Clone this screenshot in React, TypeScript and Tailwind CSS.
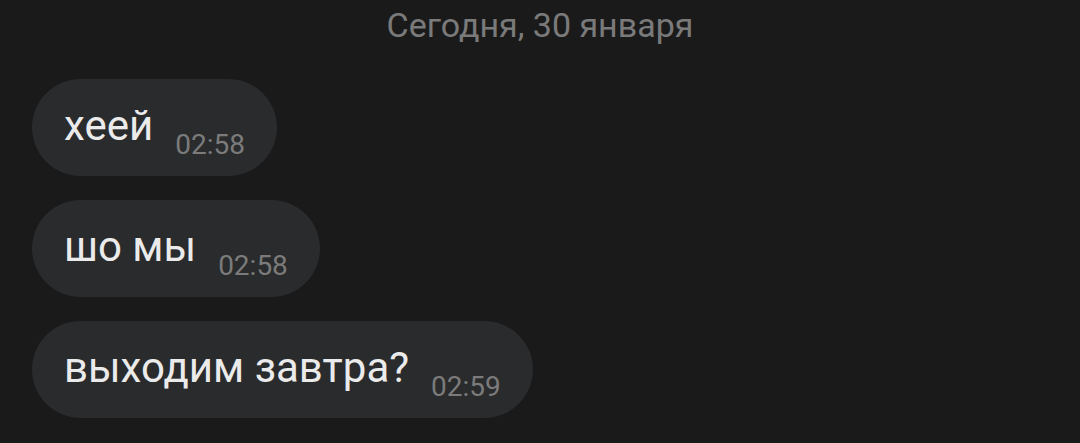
const messages = [
  { text: "хеей", time: "02:58" },
  { text: "шо мы", time: "02:58" },
  { text: "выходим завтра?", time: "02:59" },
];

export default function App() {
  return (
    <div
      className="w-[1080px] h-[443px] overflow-hidden bg-[#1a1a1a]"
      style={{ fontFamily: "Roboto, 'Noto Sans', sans-serif" }}
    >
      <div className="pt-[5px] text-center text-[34px] leading-[40px] text-[#7a7a7a]">
        Сегодня, 30 января
      </div>
      <div className="mt-[34px] flex flex-col items-start gap-[24px] pl-[32px]">
        {messages.map((m, i) => (
          <div
            key={i}
            className="flex h-[97px] items-end rounded-full bg-[#2a2b2d] pl-[32px] pr-[32px] pb-[15px]"
          >
            <span className="text-[42px] leading-[48px] text-[#ebebeb] mb-[11px]">
              {m.text}
            </span>
            <span className="ml-[22px] text-[28px] leading-[32px] text-[#7b7b7b]">
              {m.time}
            </span>
          </div>
        ))}
      </div>
    </div>
  );
}
